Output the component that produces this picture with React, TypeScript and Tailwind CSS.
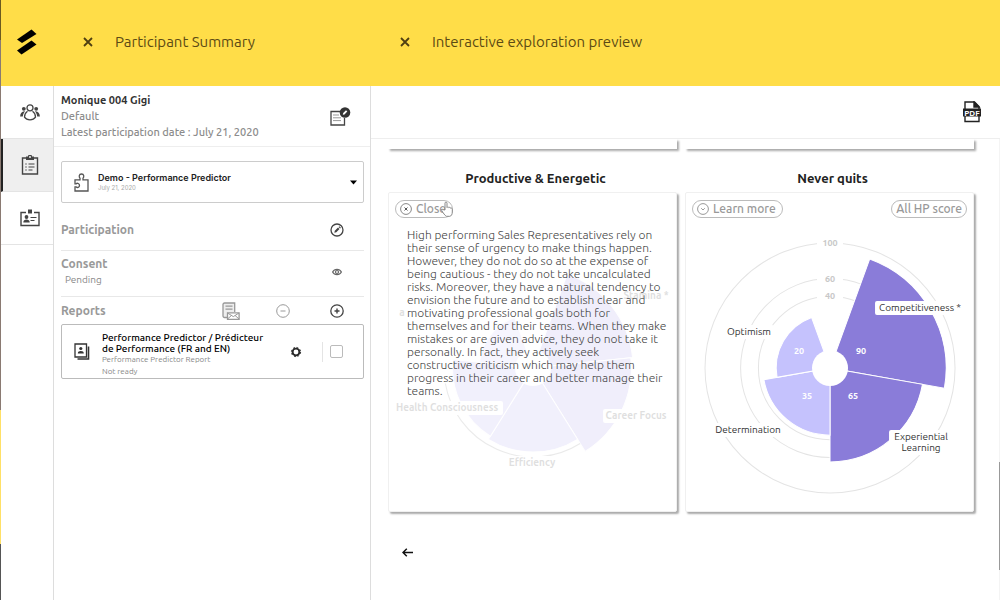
import { type ReactNode } from "react";

const PRODUCTIVE_LINES = [
  "High performing Sales Representatives rely on",
  "their sense of urgency to make things happen.",
  "However, they do not do so at the expense of",
  "being cautious - they do not take uncalculated",
  "risks. Moreover, they have a natural tendency to",
  "envision the future and to establish clear and",
  "motivating professional goals both for",
  "themselves and for their teams. When they make",
  "mistakes or are given advice, they do not take it",
  "personally. In fact, they actively seek",
  "constructive criticism which may help them",
  "progress in their career and better manage their",
  "teams.",
];

type Slice = { value: number; color: string };

const NEVER_QUITS: Slice[] = [
  { value: 90, color: "#8a7cd9" },
  { value: 65, color: "#8a7cd9" },
  { value: 35, color: "#c5c2fd" },
  { value: 20, color: "#c5c2fd" },
];

const PRODUCTIVE: Slice[] = [
  { value: 72, color: "#9d90e8" },
  { value: 70, color: "#9d90e8" },
  { value: 54, color: "#a99ff0" },
  { value: 50, color: "#a99ff0" },
  { value: 20, color: "#c5c2fd" },
];

const CX = 144;
const CY = 176;

function radius(value: number) {
  return 36 + value * 0.89;
}

function point(r: number, deg: number) {
  const a = (deg * Math.PI) / 180;
  return `${(CX + r * Math.sin(a)).toFixed(2)} ${(CY - r * Math.cos(a)).toFixed(2)}`;
}

function slicePath(value: number, from: number, to: number) {
  const r = radius(value);
  return `M${CX} ${CY}L${point(r, from)}A${r} ${r} 0 0 1 ${point(r, to)}Z`;
}

function PolarChart({
  slices,
  scale = [],
  children,
}: {
  slices: Slice[];
  scale?: number[];
  children?: ReactNode;
}) {
  // the scale labels sit in a 40 degree gap at the top
  const step = 320 / slices.length;
  return (
    <svg viewBox="0 1 287 318" className="block w-full" role="img" aria-label="Score chart">
      {scale.map((v) => (
        <g key={v}>
          <circle cx={CX} cy={CY} r={radius(v)} fill="none" stroke="#e4e4e4" />
          <rect x={CX - 13} y={CY - radius(v) - 6} width="26" height="12" fill="#fff" />
          <text
            x={CX}
            y={CY - radius(v) + 3}
            textAnchor="middle"
            fontSize="9"
            fontWeight="700"
            fill="#c8c8c8"
          >
            {v}
          </text>
        </g>
      ))}
      {slices.map((s, i) => (
        <path
          key={i}
          d={slicePath(s.value, 20 + i * step, 20 + (i + 1) * step)}
          fill={s.color}
          stroke="#fff"
        />
      ))}
      <circle cx={CX} cy={CY} r="18" fill="#fff" />
      {children}
    </svg>
  );
}

function ChartLabel({
  x,
  y,
  w,
  lines,
}: {
  x: number;
  y: number;
  w: number;
  lines: string[];
}) {
  return (
    <g>
      <rect x={x - w / 2} y={y - 7} width={w} height={3 + lines.length * 11} rx="2" fill="#fff" />
      {lines.map((l, i) => (
        <text key={l} x={x} y={y + 3 + i * 11} textAnchor="middle" fontSize="10" fill="#333">
          {l}
        </text>
      ))}
    </g>
  );
}

function CloseIcon() {
  return (
    <svg width="10" height="10" viewBox="0 0 10 10" fill="none" stroke="#4f3f12" strokeWidth="1.800">
      <path d="M1 1l8 8M9 1l-8 8" />
    </svg>
  );
}

function LogoIcon() {
  return (
    <svg width="20" height="26" viewBox="0 0 20 26">
      <path d="M0 10.500L14.500 0.500L19.500 5L5 14Z" fill="#000" />
      <path d="M0 21.500L14.500 11.500L19.500 15.500L4.500 25.500Z" fill="#000" />
    </svg>
  );
}

function PeopleIcon() {
  return (
    <svg width="20" height="17" viewBox="0 0 20 17" fill="none" stroke="#444" strokeWidth="1.300">
      <circle cx="10" cy="3.800" r="3" />
      <path d="M7.500 7.200c-2 1.300-3 3.600-3 6 1.200 1.800 3.200 2.600 5.500 2.600s4.300-.8 5.500-2.600c0-2.400-1-4.700-3-6" />
      <circle cx="3.800" cy="4.800" r="1.900" fill="#444" stroke="none" />
      <circle cx="16.200" cy="4.800" r="1.900" fill="#444" stroke="none" />
      <path
        d="M5 7.300c-2.700-.5-4.700 1.700-4.900 5.200h2.700c.2-2 1-3.700 2.200-5.200zM15 7.300c2.700-.5 4.700 1.700 4.900 5.200h-2.700c-.2-2-1-3.700-2.200-5.200z"
        fill="#444"
        stroke="none"
      />
    </svg>
  );
}

function ClipboardIcon() {
  return (
    <svg width="18" height="20" viewBox="0 0 18 20" fill="none" stroke="#444" strokeWidth="1.400">
      <path d="M5 3H1.500v16h15V3H13" />
      <path d="M5 1.500h2a2 2 0 0 1 4 0h2V5H5z" fill="#444" stroke="none" />
      <circle cx="9" cy="2" r=".9" fill="#fff" stroke="none" />
      <path d="M7.500 9h6M7.500 12h6M7.500 15h4" strokeWidth="1.200" />
      <path d="M4.300 9h1.400M4.300 12h1.400M4.300 15h1.400" strokeWidth="1.200" />
    </svg>
  );
}

function BadgeIcon() {
  return (
    <svg width="20" height="18" viewBox="0 0 20 18" fill="none" stroke="#444" strokeWidth="1.400">
      <path d="M6 3.500H1v13h18v-13h-5" />
      <path d="M8 .5h4v4H8z" fill="#444" stroke="none" />
      <circle cx="6.500" cy="8" r="1.900" fill="#444" stroke="none" />
      <path d="M3.300 13.500c0-2.300 1.500-3 3.200-3s3.200.7 3.200 3z" fill="#444" stroke="none" />
      <path d="M10.500 8.500h6M10.500 11.500h4" strokeWidth="1.200" />
    </svg>
  );
}

function NotePenIcon() {
  return (
    <svg width="22" height="19" viewBox="0 0 22 19" fill="none" stroke="#444" strokeWidth="1.300">
      <path d="M11 4.500H2V18h13.500V11" />
      <path d="M4 8h6M4 10.800h8M4 13.600h8" stroke="#999" strokeWidth="1" />
      <circle cx="16" cy="5.500" r="5.300" fill="#333" stroke="none" />
      <path d="M13.800 7.800l.4-1.700 2.800-2.800 1.300 1.300-2.800 2.800z" fill="#fff" stroke="none" />
    </svg>
  );
}

function PuzzleIcon() {
  return (
    <svg width="15" height="19" viewBox="0 0 15 19" fill="none" stroke="#555" strokeWidth="1.300">
      <path d="M1 8V6.800h5V5.200C4.800 4.200 4.800 1 7.500 1S10.200 4.200 9 5.200v1.600h5V18H1v-4.200h1.200c1 1.200 3.300.8 3.300-1.200S3.200 9.600 2.200 10.800H1z" />
    </svg>
  );
}

function PenCircleIcon() {
  return (
    <svg width="14" height="14" viewBox="0 0 14 14" fill="none" stroke="#444" strokeWidth="1.300">
      <circle cx="7" cy="7" r="6" />
      <path d="M4.300 9.700l.5-2 3.200-3.200 1.500 1.500-3.200 3.200zM8.600 4l.8-.8 1.500 1.500-.8.8z" fill="#444" stroke="none" />
    </svg>
  );
}

function EyeIcon() {
  return (
    <svg width="10" height="8" viewBox="0 0 10 8" fill="none" stroke="#666" strokeWidth="1.200">
      <path d="M.6 4C2.500.4 7.500.4 9.400 4 7.500 7.600 2.500 7.600.6 4z" />
      <circle cx="5" cy="4" r="1.500" />
    </svg>
  );
}

function MailReportIcon() {
  return (
    <svg width="18" height="18" viewBox="0 0 18 18" fill="none" stroke="#999" strokeWidth="1.300">
      <path d="M5 15.500H2.500A1.500 1.500 0 0 1 1 14V2.500A1.500 1.500 0 0 1 2.500 1h10.200v9" fill="#eee" />
      <path d="M3.500 4.200h7M3.500 7.200h7" />
      <path d="M5.500 10.800h11.600v6.500H5.500z" fill="#fff" />
      <path d="M5.500 11l5.800 3.600L17 11M5.500 17l4-3.600M17 17l-4-3.600" strokeWidth="1" />
    </svg>
  );
}

function ReportIcon() {
  return (
    <svg width="16" height="17" viewBox="0 0 16 17" fill="none" stroke="#333" strokeWidth="1.300">
      <path d="M1 1h11.500v13H1z" />
      <path d="M3.500 16H14.500V3.500" strokeWidth="1.600" />
      <circle cx="6.800" cy="5.500" r="1.600" fill="#333" stroke="none" />
      <path d="M3.800 10.500c0-2 1.300-2.600 3-2.600s3 .6 3 2.600z" fill="#333" stroke="none" />
    </svg>
  );
}

function GearIcon() {
  return (
    <svg width="12" height="12" viewBox="0 0 12 12" fill="none" stroke="#2a2a2a">
      <circle cx="6" cy="6" r="3.400" strokeWidth="1.900" />
      <circle cx="6" cy="6" r="4.600" strokeWidth="1" strokeDasharray="1.900 1.713" />
    </svg>
  );
}

function PdfIcon() {
  return (
    <svg width="20" height="22" viewBox="0 0 20 22" fill="none" stroke="#222" strokeWidth="1.400">
      <path d="M3 8V1h9.500L17 5.500V8M3 15v5.500h14V15" />
      <path d="M12 1v5h5z" fill="#222" />
      <path d="M1 7.500h18v8H1z" fill="#222" stroke="none" />
      <text x="10" y="14.500" textAnchor="middle" fontSize="8" fontWeight="700" fill="#fff" stroke="none">
        PDF
      </text>
    </svg>
  );
}

function HandCursor() {
  return (
    <svg width="12" height="16" viewBox="0 0 12 16" fill="#fff" stroke="#888" strokeWidth="1">
      <path d="M4 9V2.200c0-1.600 2-1.600 2 0V6.500c.4-.8 1.700-.7 1.900.2.500-.6 1.600-.4 1.700.5.600-.4 1.700 0 1.700 1V11c0 2.500-1 4-2.500 4.300H5.500C3.800 14.500 2.300 12 .8 9.700c-.6-1.200.8-1.900 1.600-1z" />
    </svg>
  );
}

function Section({ title, children }: { title: string; children: ReactNode }) {
  return (
    <div className="flex items-center justify-between">
      <h2 className="text-xs font-bold text-[#999]">{title}</h2>
      {children}
    </div>
  );
}

function TraitCard({ title, children }: { title: string; children: ReactNode }) {
  return (
    <section>
      <h2 className="mb-1 pl-1.5 text-center text-[13px] leading-5 font-bold text-[#222]">{title}</h2>
      <div className="relative rounded-xs border border-[#f0f0f0] bg-white shadow-[2px_2px_2px_#aaa]">
        {children}
      </div>
    </section>
  );
}

const pill =
  "flex h-[18px] items-center rounded-full border border-[#bbb] bg-white text-xs font-medium text-[#999]";

export default function App() {
  return (
    <div className="flex min-h-screen bg-white font-['Ubuntu','Noto_Sans','Open_Sans',sans-serif]">
      <div className="flex w-px flex-col">
        <div className="h-10 bg-[#6b5a20]" />
        <div className="grow bg-[#8a7a72]" />
        <div className="h-[134px] bg-[#ffe066]" />
        <div className="h-14 bg-[#555]" />
      </div>

      <div className="flex grow flex-col">
        <header className="flex h-[86px] items-center bg-[#ffdd48] pb-0.5 text-[15px] text-[#5c4a14]">
          <a href="#home" aria-label="Home" className="w-[52px] pl-4">
            <LogoIcon />
          </a>
          <div className="flex w-[317px] items-center gap-[22px] pl-[30px]">
            <button aria-label="Close participant">
              <CloseIcon />
            </button>
            <h1>Participant Summary</h1>
          </div>
          <div className="flex items-center gap-[22px] pl-[30px]">
            <button aria-label="Close preview">
              <CloseIcon />
            </button>
            <h1>Interactive exploration preview</h1>
          </div>
        </header>

        <div className="flex grow">
          <nav className="w-[53px] shrink-0 border-r border-[#ddd]">
            <a
              href="#people"
              aria-label="People"
              className="flex h-[53px] items-center justify-center border-b border-[#e4e4e4] pl-1.5"
            >
              <PeopleIcon />
            </a>
            <a
              href="#surveys"
              aria-label="Surveys"
              className="flex h-[53px] items-center justify-center border-b border-l-2 border-b-[#e4e4e4] border-l-[#222] bg-[#efefef] pl-1"
            >
              <ClipboardIcon />
            </a>
            <a
              href="#profiles"
              aria-label="Profiles"
              className="flex h-[53px] items-center justify-center border-b border-[#e4e4e4] pl-1.5"
            >
              <BadgeIcon />
            </a>
          </nav>

          <aside className="w-[317px] shrink-0 border-r border-[#ddd]">
            <div className="flex h-[61px] items-center justify-between border-b border-[#eee] pr-[19px] pl-[7px] text-[11px] leading-4 font-medium text-[#8c8c8c]">
              <div>
                <p className="font-bold text-[#333]">Monique 004 Gigi</p>
                <p>Default</p>
                <p>Latest participation date : July 21, 2020</p>
              </div>
              <button aria-label="Edit note">
                <NotePenIcon />
              </button>
            </div>

            <div className="pr-1.5 pl-[7px]">
              <button className="mt-3.5 flex h-[42px] w-full items-center rounded-xs border border-[#ccc] pr-1.5 pl-3 text-left font-['Inter',sans-serif]">
                <PuzzleIcon />
                <span className="ml-[9px] grow">
                  <span className="block text-[9px] leading-3 font-semibold text-[#222]">
                    Demo - Performance Predictor
                  </span>
                  <span className="block text-[6px] leading-2 text-[#aaa]">July 21, 2020</span>
                </span>
                <svg width="7" height="5" viewBox="0 0 7 5">
                  <path d="M0 .5h7L3.500 4.500z" fill="#000" />
                </svg>
              </button>

              <div className="border-b border-[#e8e8e8] pt-[19px] pr-5 pb-3">
                <Section title="Participation">
                  <button aria-label="Edit participation">
                    <PenCircleIcon />
                  </button>
                </Section>
              </div>

              <div className="flex items-center justify-between border-b border-[#e8e8e8] pt-[5px] pr-[22px] pb-2">
                <div>
                  <h2 className="text-xs font-bold text-[#999]">Consent</h2>
                  <p className="ml-1 text-[10px] leading-4 text-[#888]">Pending</p>
                </div>
                <button aria-label="Show consent">
                  <EyeIcon />
                </button>
              </div>

              <div className="pt-[3px] pr-5">
                <Section title="Reports">
                  <div className="flex h-[22px] items-center">
                    <button aria-label="Send reports">
                      <MailReportIcon />
                    </button>
                    <button aria-label="Remove report" className="ml-9">
                      <svg width="14" height="14" viewBox="0 0 14 14" fill="none" stroke="#999">
                        <circle cx="7" cy="7" r="6.300" />
                        <path d="M4.500 7h5" />
                      </svg>
                    </button>
                    <button aria-label="Add report" className="ml-10">
                      <svg width="14" height="14" viewBox="0 0 14 14" fill="none" stroke="#444">
                        <circle cx="7" cy="7" r="6.200" strokeWidth="1.300" />
                        <path d="M4.500 7h5M7 4.500v5" strokeWidth="1.400" />
                      </svg>
                    </button>
                  </div>
                </Section>
              </div>

              <div className="mt-0.5 flex h-[55px] items-center rounded-xs border border-[#bbb] pr-5 pl-3">
                <ReportIcon />
                <div className="ml-3 grow pt-1.5 text-[8px] leading-3 text-[#888]">
                  <p className="text-[10px] leading-[11px] font-medium text-[#000]">
                    Performance Predictor / Prédicteur
                    <br />
                    de Performance (FR and EN)
                  </p>
                  <p>Performance Predictor Report</p>
                  <p>Not ready</p>
                </div>
                <button aria-label="Report settings">
                  <GearIcon />
                </button>
                <div className="ml-5 flex h-5 items-center border-l border-[#e4e4e4] pl-[7px]">
                  <input
                    type="checkbox"
                    aria-label="Select report"
                    className="size-[13px] appearance-none rounded-xs border border-[#bbb]"
                  />
                </div>
              </div>
            </div>
          </aside>

          <main className="flex grow flex-col">
            <div className="flex h-[53px] items-center justify-end border-b border-[#eee] pr-[18px]">
              <button aria-label="Export PDF">
                <PdfIcon />
              </button>
            </div>

            <div className="flex grow">
              <div className="grow pr-[25px] pl-[17px]">
                <div className="grid grid-cols-2 gap-x-2">
                  <div className="mb-[19px] h-2.5 shadow-[2px_2px_2px_#aaa]" />
                  <div className="mb-[19px] h-2.5 shadow-[2px_2px_2px_#aaa]" />

                  <TraitCard title="Productive & Energetic">
                    <div className="font-bold opacity-15">
                      <PolarChart slices={PRODUCTIVE}>
                        <path
                          d={`M${point(89, 260)}A89 89 0 0 0 ${point(89, 148)}`}
                          fill="none"
                          stroke="#777"
                        />
                        <ChartLabel x={257} y={104} w={46} lines={["Stamina *"]} />
                        <ChartLabel x={247} y={224} w={66} lines={["Career Focus"]} />
                        <ChartLabel x={143} y={271} w={54} lines={["Efficiency"]} />
                        <ChartLabel x={58} y={216} w={112} lines={["Health Consciousness"]} />
                        <ChartLabel x={13} y={121} w={12} lines={["a"]} />
                      </PolarChart>
                    </div>
                    <div className="absolute inset-x-0 top-[7px] px-1.5">
                      <button className={`${pill} gap-1 pr-1.5 pl-1`}>
                        <svg width="12" height="12" viewBox="0 0 12 12" fill="none" stroke="#888">
                          <circle cx="6" cy="6" r="5.400" />
                          <path d="M4.500 4.500l3 3M7.500 4.500l-3 3" stroke="#555" />
                        </svg>
                        Close
                      </button>
                      <p className="mt-2.5 pl-3 text-xs leading-[13px] font-light whitespace-pre text-[#444]">
                        {PRODUCTIVE_LINES.join("\n")}
                      </p>
                    </div>
                    <div className="absolute top-2 left-[52px]">
                      <HandCursor />
                    </div>
                  </TraitCard>

                  <TraitCard title="Never quits">
                    <PolarChart slices={NEVER_QUITS} scale={[100, 60, 40]}>
                      <g fill="#fff" fontSize="9" fontWeight="700" textAnchor="middle">
                        <text x="175" y="162">90</text>
                        <text x="167" y="207">65</text>
                        <text x="121" y="207">35</text>
                        <text x="113" y="162">20</text>
                      </g>
                      <ChartLabel x={234} y={116} w={90} lines={["Competitiveness *"]} />
                      <ChartLabel x={235} y={245} w={64} lines={["Experiential", "Learning"]} />
                      <ChartLabel x={62} y={238} w={72} lines={["Determination"]} />
                      <ChartLabel x={63} y={140} w={50} lines={["Optimism"]} />
                    </PolarChart>
                    <div className="absolute inset-x-0 top-[7px] flex justify-between px-1.5">
                      <button className={`${pill} gap-1 pr-1.5 pl-1`}>
                        <svg width="12" height="12" viewBox="0 0 12 12" fill="none" stroke="#999">
                          <circle cx="6" cy="6" r="5.400" />
                          <path d="M4.200 5.200L6 7l1.800-1.800" />
                        </svg>
                        Learn more
                      </button>
                      <button className={`${pill} px-1`}>All HP score</button>
                    </div>
                  </TraitCard>
                </div>

                <a href="#back" aria-label="Back" className="mt-9 ml-3.5 inline-block">
                  <svg width="11" height="9" viewBox="0 0 11 9" fill="none" stroke="#111" strokeWidth="1.500">
                    <path d="M4.800 .8L1 4.500l3.800 3.700M1 4.500h10" />
                  </svg>
                </a>
              </div>

              <div className="flex w-px flex-col justify-end bg-[#f4f4f4] pb-[30px]">
                <div className="h-[108px] bg-[#999]" />
              </div>
            </div>
          </main>
        </div>
      </div>
    </div>
  );
}
